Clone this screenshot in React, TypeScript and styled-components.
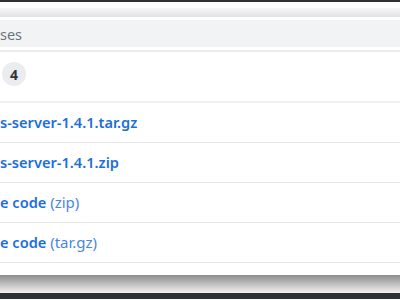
import React, { ReactElement } from 'react'
import styled, { createGlobalStyle } from 'styled-components'

const Global = createGlobalStyle`
  html, body {
    margin: 0;
    padding: 0;
    background: #ffffff;
  }
  body {
    font-family: 'Noto Sans', 'Open Sans', sans-serif;
  }
`

const Frame = styled.div`
  width: 400px;
  height: 300px;
  overflow: hidden;
  display: flex;
  flex-direction: column;
  background: #ffffff;
`

const DarkBar = styled.div<{ $h: number }>`
  height: ${p => p.$h}px;
  flex-shrink: 0;
  background: #2e3236;
`

const Shade = styled.div<{ $h: number; $from: string; $to: string }>`
  height: ${p => p.$h}px;
  flex-shrink: 0;
  background: linear-gradient(to bottom, ${p => p.$from}, ${p => p.$to});
`

const Gap = styled.div<{ $h: number }>`
  height: ${p => p.$h}px;
  flex-shrink: 0;
`

const Header = styled.div`
  height: 27px;
  flex-shrink: 0;
  background: #f2f3f5;
  display: flex;
  align-items: center;
  font-size: 14.5px;
  color: #6a737d;
  border-bottom: 3px solid #ffffff;
  box-shadow: 0 2px 0 #ededed;
`

const Summary = styled.div`
  height: 51px;
  flex-shrink: 0;
  margin-top: 2px;
  display: flex;
  align-items: center;
  padding-left: 2px;
  border-bottom: 2px solid #f0f0f0;
  box-sizing: border-box;
`

const Badge = styled.span`
  width: 24px;
  height: 24px;
  border-radius: 50%;
  background: #eaecef;
  color: #2f353b;
  font-size: 14px;
  font-weight: 700;
  display: flex;
  align-items: center;
  justify-content: center;
  margin-top: -5px;
`

const Row = styled.div`
  height: 40px;
  flex-shrink: 0;
  box-sizing: border-box;
  display: flex;
  align-items: center;
  border-bottom: 1px solid #e6e6e6;
  padding-bottom: 1px;
`

const Link = styled.a`
  color: #1c6fd9;
  font-weight: 600;
  font-size: 14.6px;
  text-decoration: none;
  white-space: nowrap;
`

const Ext = styled.span`
  color: #4a87de;
  font-weight: 400;
  font-size: 15px;
`

const assets = ['s-server-1.4.1.tar.gz', 's-server-1.4.1.zip']
const sources = ['zip', 'tar.gz']

export default function App(): ReactElement {
  return (
    <Frame>
      <Global />
      <DarkBar $h={2} />
      <Gap $h={6} />
      <Shade $h={9} $from="#f7f7f7" $to="#e2e2e2" />
      <Gap $h={3} />
      <Header>ses</Header>
      <Summary>
        <Badge>4</Badge>
      </Summary>
      {assets.map(a => (
        <Row key={a}>
          <Link>{a}</Link>
        </Row>
      ))}
      {sources.map(s => (
        <Row key={s}>
          <Link>
            e code <Ext>({s})</Ext>
          </Link>
        </Row>
      ))}
      <Gap $h={12} />
      <Shade $h={18} $from="#8c8c8c" $to="#f2f2f2" />
      <DarkBar $h={6} />
    </Frame>
  )
}
